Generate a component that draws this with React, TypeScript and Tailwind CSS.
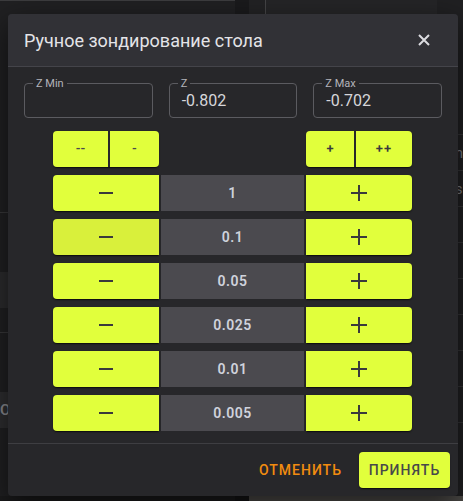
import React from "react";

const YELLOW = "bg-[#e1ff3c]";

const MinusIcon = () => (
  <svg width="14" height="14" viewBox="0 0 14 14">
    <path d="M0 7h14" stroke="#3a3a3c" strokeWidth="2" />
  </svg>
);

const PlusIcon = () => (
  <svg width="16" height="16" viewBox="0 0 16 16">
    <path d="M0 8h16M8 0v16" stroke="#3a3a3c" strokeWidth="2" />
  </svg>
);

const Field = ({ label, value }: { label: string; value?: string }) => (
  <div className="relative h-[35px] rounded-[4px] border border-[#5b5b60] flex items-center px-3">
    <span className="absolute -top-[7px] left-[8px] px-[3px] bg-[#27272a] text-[11px] leading-[13px] text-[#b4b4ba]">
      {label}
    </span>
    <span className="text-[16px] text-[#d6d6da] pt-[1px]">{value}</span>
  </div>
);

const steps = ["1", "0.1", "0.05", "0.025", "0.01", "0.005"];

const btnShadow = "shadow-[0_2px_1px_-1px_rgba(0,0,0,0.5),0_1px_2px_0_rgba(0,0,0,0.3)]";

const Background = () => (
  <div className="flex h-full w-full">
    <div className="w-[253px] flex flex-col bg-[#202022] border-t border-[#3c3c3e]">
      <div className="h-[211px]" />
      <div className="h-[60px] border-t border-[#38383a]" />
      <div className="h-[36px] bg-[#2c2c2e] text-[#777] text-sm pl-[12px] leading-[36px]">,</div>
      <div className="h-[24px]" />
      <div className="h-[60px] border-t border-[#38383a]" />
      <div className="h-[36px] bg-[#2e2e30] text-[#8a8a8e] text-[15px] font-semibold leading-[36px] whitespace-nowrap">
        ОІ
      </div>
      <div className="flex-1" />
      <div className="h-[5px] bg-[#1b1b1c]" />
    </div>
    <div className="w-[16px] flex flex-col bg-[#1a1a1c]">
      <div className="flex-1" />
      <div className="h-[5px] bg-[#151516]" />
    </div>
    <div className="flex-1 flex flex-col bg-[#222224]">
      <div className="flex-1 flex">
        <div className="w-[16px]" />
        <div className="flex-1 flex border-l border-[#444446] bg-[#252527]">
          <div className="w-[171px]" />
          <div className="flex-1 flex flex-col overflow-hidden bg-[#202022] pt-[134px]">
            {["mm", "Pos", "m", "m", "бl", "бl", "бl", "(\\", "Т"].map((t, i) => (
              <div
                key={i}
                className="h-[36px] border-t border-[#343436] text-[#7a7a7e] text-[14px] leading-[36px] pl-[1px] whitespace-nowrap"
              >
                {t}
              </div>
            ))}
          </div>
        </div>
      </div>
      <div className="h-[5px] bg-[#4d4b48]" />
    </div>
  </div>
);

export default function App() {
  return (
    <div
      className="relative w-[463px] h-[501px] overflow-hidden bg-[#1f1f21]"
      style={{ fontFamily: "Roboto, 'Noto Sans', sans-serif" }}
    >
      <Background />

      {/* dialog */}
      <div className="absolute left-[8px] top-[14px] w-[450px] h-[482px] flex flex-col rounded-[4px] bg-[#27272a] shadow-[0_10px_30px_rgba(0,0,0,0.6)]">
        <div className="h-[52px] flex items-center justify-between pl-4 pr-[28px] rounded-t-[4px] bg-[#313136]">
          <span className="text-[18px] text-[#e4e4e8]">Ручное зондирование стола</span>
          <svg width="12" height="12" viewBox="0 0 12 12">
            <path d="M1 1l10 10M11 1L1 11" stroke="#dcdce0" strokeWidth="2" />
          </svg>
        </div>
        <div className="h-px bg-[#44444a]" />

        <div className="px-4 pt-4">
          <div className="grid grid-cols-3 gap-4">
            <Field label="Z Min" />
            <Field label="Z" value="-0.802" />
            <Field label="Z Max" value="-0.702" />
          </div>
        </div>

        <div className="mt-[13px] ml-[45px] w-[359px] flex flex-col gap-2">
          <div className="h-[36px] flex justify-between">
            <div className={`flex w-[106px] gap-[2px] rounded-[4px] ${btnShadow}`}>
              <div className={`w-[55px] ${YELLOW} rounded-l-[4px] flex items-center justify-center text-[13px] font-semibold text-[#4a4a4c]`}>
                --
              </div>
              <div className={`flex-1 ${YELLOW} rounded-r-[4px] flex items-center justify-center text-[13px] font-semibold text-[#4a4a4c]`}>
                -
              </div>
            </div>
            <div className={`flex w-[106px] gap-[2px] rounded-[4px] ${btnShadow}`}>
              <div className={`w-[48px] ${YELLOW} rounded-l-[4px] flex items-center justify-center text-[13px] font-semibold text-[#3a3a3c]`}>
                +
              </div>
              <div className={`flex-1 ${YELLOW} rounded-r-[4px] flex items-center justify-center text-[13px] font-semibold text-[#3a3a3c] tracking-[1px]`}>
                ++
              </div>
            </div>
          </div>

          {steps.map((s, i) => (
            <div key={s} className="h-[36px] grid grid-cols-[106px_143px_106px] gap-[2px]">
              <div
                className={`rounded-l-[4px] flex items-center justify-center ${btnShadow} ${
                  i === 1 ? "bg-[#d9f03b]" : YELLOW
                }`}
              >
                <MinusIcon />
              </div>
              <div className="bg-[#4b4a4f] flex items-center justify-center text-[14px] font-semibold tracking-[0.5px] text-[#cfd2dc]">
                {s}
              </div>
              <div className={`rounded-r-[4px] flex items-center justify-center ${btnShadow} ${YELLOW}`}>
                <PlusIcon />
              </div>
            </div>
          ))}
        </div>

        <div className="mt-[12px] h-px bg-[#3e3e42]" />

        <div className="flex-1 flex items-center justify-end gap-[9px] pr-[8px]">
          <div className="h-9 px-2 flex items-center text-[14px] font-medium tracking-[1px] text-[#f28c0f]">
            ОТМЕНИТЬ
          </div>
          <div className={`h-9 w-[91px] rounded-[4px] flex items-center justify-center text-[14px] font-medium tracking-[1px] text-[#48484a] ${YELLOW} ${btnShadow}`}>
            ПРИНЯТЬ
          </div>
        </div>
      </div>
    </div>
  );
}
